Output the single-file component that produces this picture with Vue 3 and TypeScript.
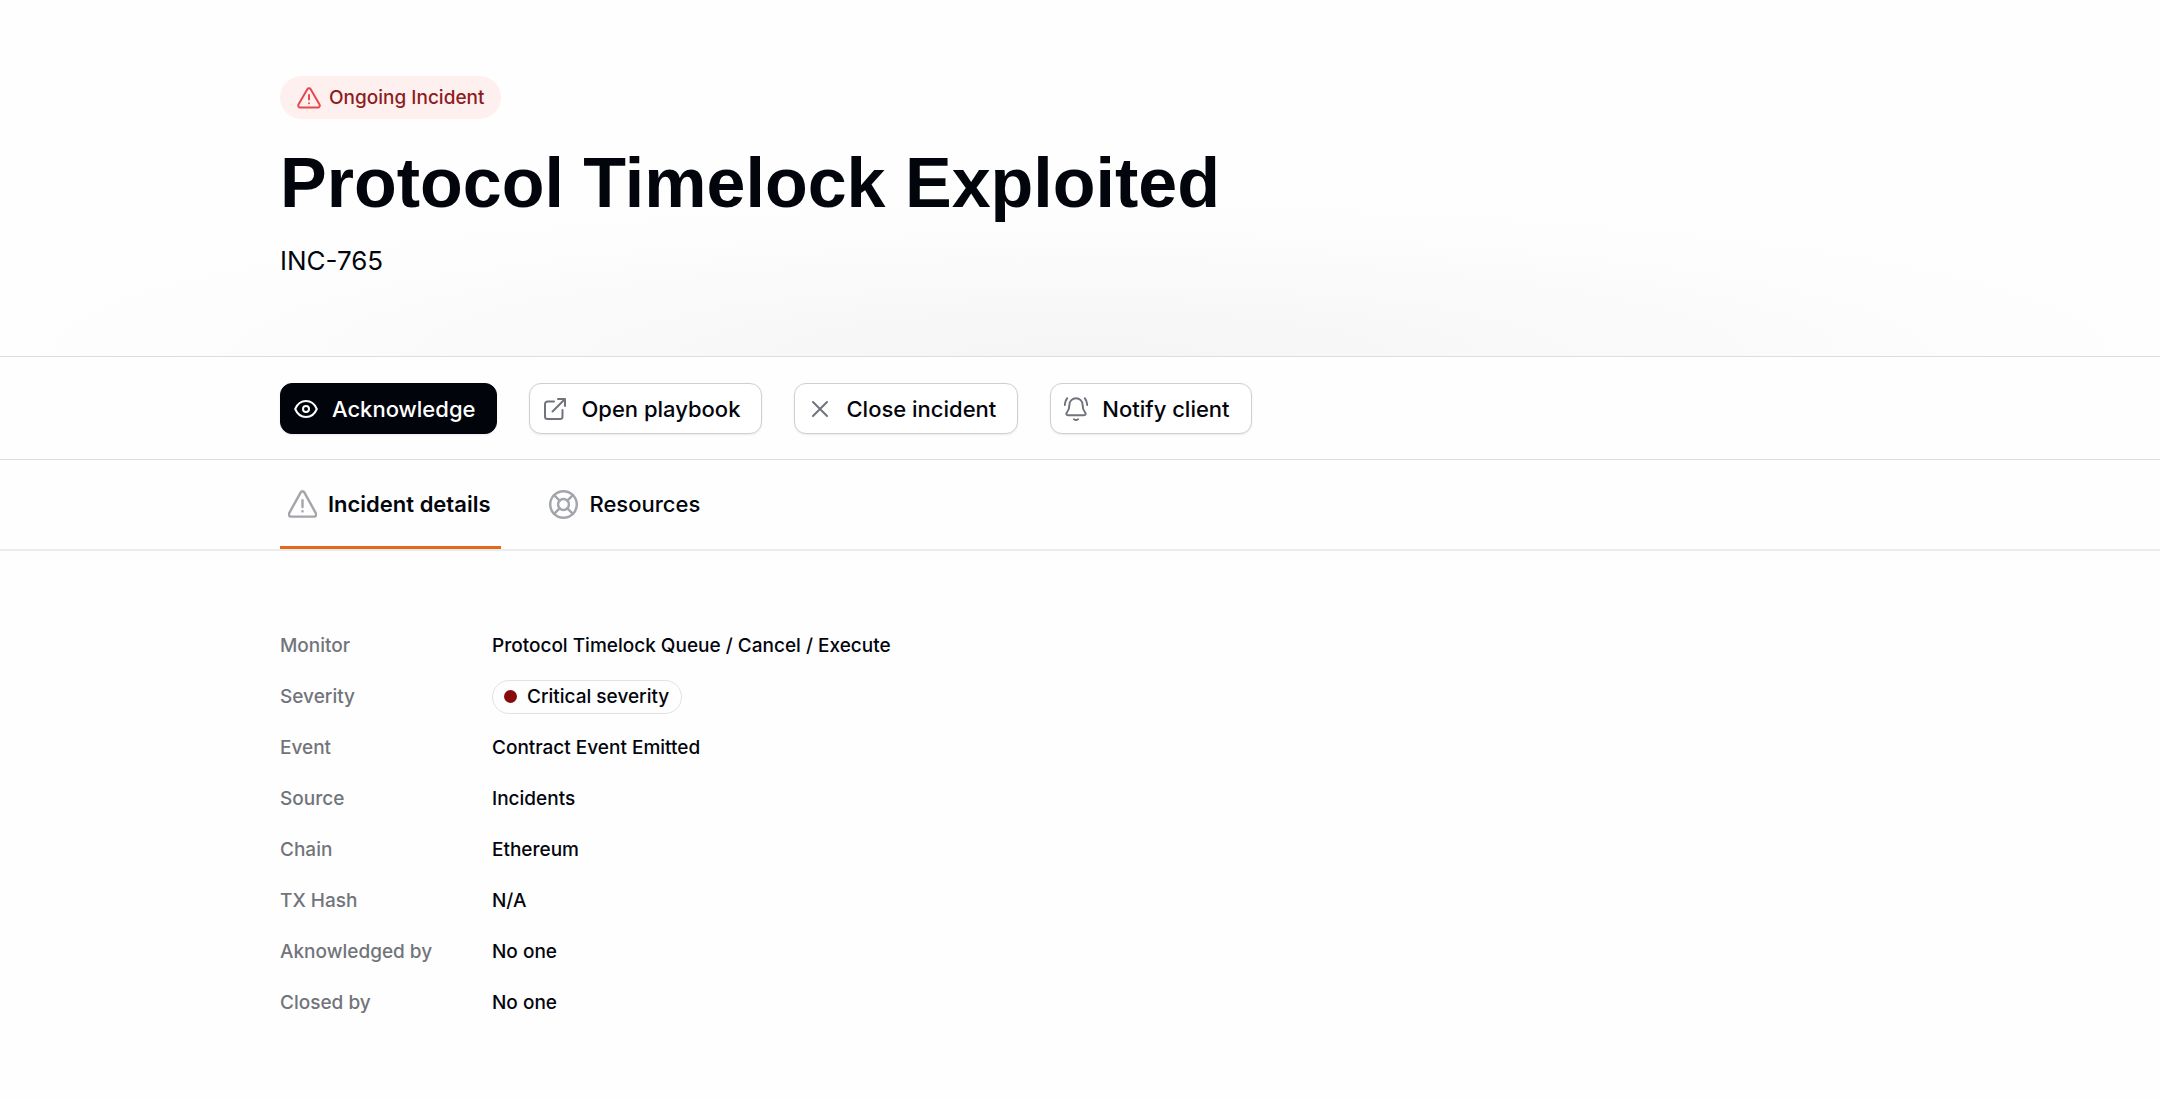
<script setup lang="ts">
import { ref } from 'vue'

interface Detail {
  label: string
  value: string
  severity?: boolean
}

type TabId = 'details' | 'resources'

const activeTab = ref<TabId>('details')

const details: Detail[] = [
  { label: 'Monitor', value: 'Protocol Timelock Queue / Cancel / Execute' },
  { label: 'Severity', value: 'Critical severity', severity: true },
  { label: 'Event', value: 'Contract Event Emitted' },
  { label: 'Source', value: 'Incidents' },
  { label: 'Chain', value: 'Ethereum' },
  { label: 'TX Hash', value: 'N/A' },
  { label: 'Aknowledged by', value: 'No one' },
  { label: 'Closed by', value: 'No one' },
]
</script>

<template>
  <main class="page">
    <header class="hero">
      <div class="status">
        <svg class="icon status-icon" viewBox="0 0 24 24" aria-hidden="true">
          <path d="M10.3 3.2 1.5 18.4A2 2 0 0 0 3.200 21.400H20.800A2 2 0 0 0 22.500 18.400L13.700 3.200A2 2 0 0 0 10.300 3.200ZM12 9V13.500M12 17.200V17.300" />
        </svg>
        <span>Ongoing Incident</span>
      </div>
      <h1 class="title">Protocol Timelock Exploited</h1>
      <p class="reference">INC-765</p>
    </header>

    <div class="actions">
      <button type="button" class="button primary">
        <svg class="icon" viewBox="0 0 24 24" aria-hidden="true">
          <path d="M1.200 12C3.300 7 7.200 4 12 4S20.700 7 22.800 12C20.700 17 16.800 20 12 20S3.300 17 1.200 12Z" />
          <circle cx="12" cy="12" r="3" />
        </svg>
        Acknowledge
      </button>
      <button type="button" class="button">
        <svg class="icon" viewBox="0 0 24 24" aria-hidden="true">
          <path d="M11 4.500H4.500A2.500 2.500 0 0 0 2 7V19.500A2.500 2.500 0 0 0 4.500 22H17A2.500 2.500 0 0 0 19.500 19.500V13M9.500 14.500 22 2M15 2H22V9" />
        </svg>
        Open playbook
      </button>
      <button type="button" class="button">
        <svg class="icon" viewBox="0 0 24 24" aria-hidden="true">
          <path d="M5 5 19 19M19 5 5 19" />
        </svg>
        Close incident
      </button>
      <button type="button" class="button">
        <svg class="icon" viewBox="0 0 24 24" aria-hidden="true">
          <path d="M12 1.200A6.600 6.600 0 0 0 5.400 7.800C5.400 11.500 4.500 13.600 3 15.300C1.800 16.700 2.300 18.200 4 18.200H20C21.700 18.200 22.200 16.700 21 15.300C19.500 13.600 18.600 11.500 18.600 7.800A6.600 6.600 0 0 0 12 1.200ZM10 22.300Q12 23.800 14 22.300M3.200 1.200Q1.200 3.800 .8 8M20.800 1.200Q22.800 3.800 23.200 8" />
        </svg>
        Notify client
      </button>
    </div>

    <nav class="tabs" role="tablist">
      <button
        type="button"
        role="tab"
        class="tab"
        :class="{ active: activeTab === 'details' }"
        :aria-selected="activeTab === 'details'"
        @click="activeTab = 'details'"
      >
        <svg class="icon tab-icon" viewBox="0 0 24 24" aria-hidden="true">
          <path d="M10.500 2 .9 19.300A1.800 1.800 0 0 0 2.500 22H21.500A1.800 1.800 0 0 0 23.100 19.300L13.500 2A1.700 1.700 0 0 0 10.500 2ZM12 8.500V14M12 17.600V17.700" />
        </svg>
        Incident details
      </button>
      <button
        type="button"
        role="tab"
        class="tab"
        :class="{ active: activeTab === 'resources' }"
        :aria-selected="activeTab === 'resources'"
        @click="activeTab = 'resources'"
      >
        <svg class="icon tab-icon" viewBox="0 0 24 24" aria-hidden="true">
          <circle cx="12" cy="12" r="11" />
          <circle cx="12" cy="12" r="4.500" />
          <path d="M4.200 4.200 8.800 8.800M19.800 4.200 15.200 8.800M4.200 19.800 8.800 15.200M19.800 19.800 15.200 15.200" />
        </svg>
        Resources
      </button>
    </nav>

    <dl class="details">
      <div v-for="item in details" :key="item.label" class="row">
        <dt>{{ item.label }}</dt>
        <dd>
          <span v-if="item.severity" class="severity">
            <i class="dot"></i>{{ item.value }}
          </span>
          <template v-else>{{ item.value }}</template>
        </dd>
      </div>
    </dl>
  </main>
</template>

<style>
body {
  margin: 0;
  background: #fefefe;
}
</style>

<style scoped>
.page {
  --gutter: 280px;
  color: #03050d;
  font-family: Inter, "Liberation Sans", sans-serif;
  font-size: 19px;
  font-weight: 500;
}

.icon {
  flex: none;
  width: 24px;
  height: 24px;
  fill: none;
  stroke: currentColor;
  stroke-width: 2;
  stroke-linecap: round;
  stroke-linejoin: round;
}

.hero {
  display: flex;
  flex-direction: column;
  align-items: flex-start;
  padding: 76px var(--gutter) 79px;
  border-bottom: 1px solid #dededf;
  background: radial-gradient(ellipse 50% 44% at 50% 100%, #f5f5f5, #fefefe);
}

.status {
  display: flex;
  align-items: center;
  gap: 8px;
  height: 43px;
  padding: 0 17px;
  border-radius: 22px;
  background: #fff0f0;
  color: #8c1d20;
}

.status-icon {
  color: #e5484d;
}

.title {
  margin: 20px 0 0;
  font-family: "Liberation Sans", Arial, sans-serif;
  font-size: 70px;
  line-height: 88px;
  font-weight: 700;
}

.reference {
  margin: 18px 0 0;
  font-size: 26px;
  line-height: 32px;
  font-weight: 400;
}

.actions {
  display: flex;
  flex-wrap: wrap;
  gap: 32px;
  padding: 26px var(--gutter) 25px;
  border-bottom: 1px solid #dededf;
}

.button {
  display: flex;
  align-items: center;
  gap: 14px;
  height: 51px;
  padding: 0 21px 0 13px;
  border: 1px solid #cfcfd2;
  border-radius: 12px;
  background: #fff;
  box-shadow: 0 1px 2px rgba(0, 0, 0, 0.08);
  color: inherit;
  font: inherit;
  font-size: 22px;
}

.button .icon {
  color: #71747d;
}

.primary {
  border-color: #02040c;
  background: #02040c;
  color: #fff;
}

.primary .icon {
  color: #fff;
}

.tabs {
  display: flex;
  gap: 40px;
  padding: 0 var(--gutter);
  border-bottom: 2px solid #ebecec;
}

.tab {
  display: flex;
  align-items: center;
  gap: 11px;
  height: 89px;
  padding: 2px 11px 0 8px;
  border: 0;
  border-bottom: 3px solid transparent;
  background: none;
  color: inherit;
  font: inherit;
  font-size: 22px;
}

.tab.active {
  border-bottom-color: #e5671c;
  font-weight: 600;
}

.tab-icon {
  width: 29px;
  height: 29px;
  color: #a3a5ab;
}

.details {
  margin: 0;
  padding: 69px var(--gutter);
}

.row {
  display: grid;
  grid-template-columns: 212px 1fr;
  align-items: center;
  height: 51px;
}

dt {
  color: #72747b;
}

dd {
  margin: 0;
}

.severity {
  display: inline-flex;
  align-items: center;
  gap: 10px;
  height: 32px;
  padding: 0 12px 0 11px;
  border: 1px solid #e2e2e4;
  border-radius: 17px;
}

.dot {
  width: 13px;
  height: 13px;
  border-radius: 50%;
  background: #870a0c;
}
</style>
